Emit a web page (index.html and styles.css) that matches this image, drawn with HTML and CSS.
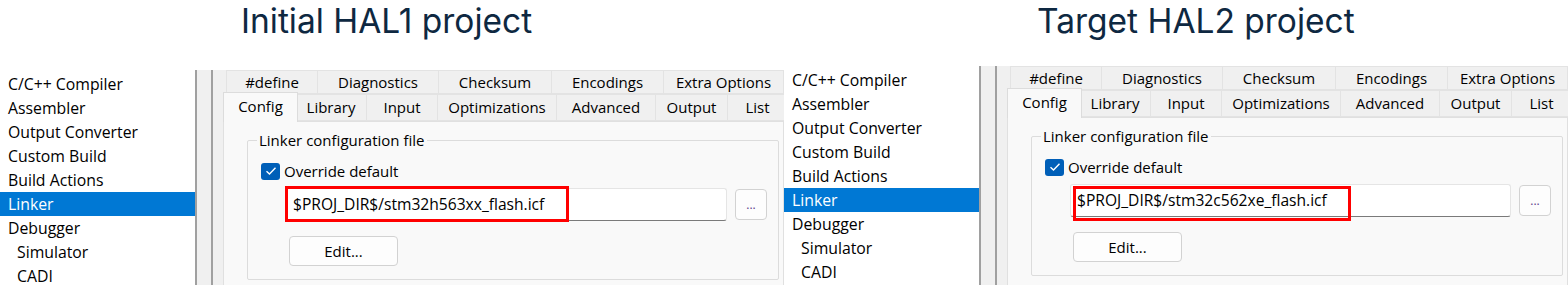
FILE: index.html
```html
<!DOCTYPE html>
<html lang="en">
<head>
    <meta charset="UTF-8">
    <meta name="viewport" content="width=device-width, initial-scale=1.0">
    <title>HAL1 to HAL2 linker options</title>
    <link rel="stylesheet" href="styles.css">
</head>
<body>

    <div class="slide">

        <div class="half half-left">
            <h2 class="title">Initial HAL1 project</h2>
            <div class="shot">
                <ul class="tree">
                    <li>C/C++ Compiler</li>
                    <li>Assembler</li>
                    <li>Output Converter</li>
                    <li>Custom Build</li>
                    <li>Build Actions</li>
                    <li class="selected">Linker</li>
                    <li>Debugger</li>
                    <li class="sub">Simulator</li>
                    <li class="sub">CADI</li>
                </ul>
                <div class="splitter"></div>
                <div class="dialog">
                    <div class="tab-row back">
                        <div class="tab">#define</div>
                        <div class="tab">Diagnostics</div>
                        <div class="tab">Checksum</div>
                        <div class="tab">Encodings</div>
                        <div class="tab">Extra Options</div>
                    </div>
                    <div class="tab-row front">
                        <div class="tab active">Config</div>
                        <div class="tab">Library</div>
                        <div class="tab">Input</div>
                        <div class="tab">Optimizations</div>
                        <div class="tab">Advanced</div>
                        <div class="tab">Output</div>
                        <div class="tab">List</div>
                    </div>
                    <div class="page">
                        <fieldset class="group">
                            <legend>Linker configuration file</legend>
                            <label class="check">
                                <span class="box">
                                    <svg width="12" height="10" viewBox="0 0 12 10"><path d="M1.5 5.2 L4.5 8 L10.5 1.8" fill="none" stroke="#fff" stroke-width="1.4"/></svg>
                                </span>
                                Override default
                            </label>
                            <div class="path-row">
                                <div class="path">$PROJ_DIR$/stm32h563xx_flash.icf</div>
                                <button class="browse">...</button>
                            </div>
                            <button class="edit">Edit...</button>
                        </fieldset>
                    </div>
                </div>
                <div class="mark mark-left"></div>
            </div>
        </div>

        <div class="half half-right">
            <h2 class="title">Target HAL2 project</h2>
            <div class="shot">
                <ul class="tree">
                    <li>C/C++ Compiler</li>
                    <li>Assembler</li>
                    <li>Output Converter</li>
                    <li>Custom Build</li>
                    <li>Build Actions</li>
                    <li class="selected">Linker</li>
                    <li>Debugger</li>
                    <li class="sub">Simulator</li>
                    <li class="sub">CADI</li>
                </ul>
                <div class="splitter"></div>
                <div class="dialog">
                    <div class="tab-row back">
                        <div class="tab">#define</div>
                        <div class="tab">Diagnostics</div>
                        <div class="tab">Checksum</div>
                        <div class="tab">Encodings</div>
                        <div class="tab">Extra Options</div>
                    </div>
                    <div class="tab-row front">
                        <div class="tab active">Config</div>
                        <div class="tab">Library</div>
                        <div class="tab">Input</div>
                        <div class="tab">Optimizations</div>
                        <div class="tab">Advanced</div>
                        <div class="tab">Output</div>
                        <div class="tab">List</div>
                    </div>
                    <div class="page">
                        <fieldset class="group">
                            <legend>Linker configuration file</legend>
                            <label class="check">
                                <span class="box">
                                    <svg width="12" height="10" viewBox="0 0 12 10"><path d="M1.5 5.2 L4.5 8 L10.5 1.8" fill="none" stroke="#fff" stroke-width="1.4"/></svg>
                                </span>
                                Override default
                            </label>
                            <div class="path-row">
                                <div class="path">$PROJ_DIR$/stm32c562xe_flash.icf</div>
                                <button class="browse">...</button>
                            </div>
                            <button class="edit">Edit...</button>
                        </fieldset>
                    </div>
                </div>
                <div class="mark mark-right"></div>
            </div>
        </div>

    </div>

</body>
</html>
```

FILE: styles.css
```css
* {
    margin: 0;
    padding: 0;
    box-sizing: border-box;
}

body {
    background: #ffffff;
    font-family: "Open Sans", "Noto Sans", sans-serif;
    font-size: 15px;
    color: #000000;
    overflow: hidden;
}

.slide {
    display: flex;
    width: 1568px;
    height: 285px;
    overflow: hidden;
}

.half {
    width: 784px;
    flex: none;
    overflow: hidden;
}

.title {
    font-family: Inter, "Noto Sans", sans-serif;
    font-weight: 400;
    font-size: 33.5px;
    line-height: 40px;
    color: #0e2841;
    height: 70px;
    padding-top: 1px;
}

.half-left .title {
    padding-left: 241px;
}

.half-right .title {
    padding-left: 253px;
    height: 66px;
}

/* screenshot */
.shot {
    position: relative;
    display: flex;
    height: 220px;
}

.tree {
    list-style: none;
    width: 195px;
    flex: none;
    background: #ffffff;
    padding-top: 2px;
    font-size: 15.8px;
}

.tree li {
    height: 24px;
    line-height: 24px;
    padding-left: 8px;
    white-space: nowrap;
}

.tree li.sub {
    padding-left: 17px;
}

.tree li.selected {
    background: #0078d4;
    color: #ffffff;
}

.splitter {
    width: 18px;
    flex: none;
    background: #f0f0f0;
    border-left: 2px solid #a0a0a0;
    border-right: 2px solid #a0a0a0;
}

.dialog {
    flex: 1;
    background: #f0f0f0;
    overflow: hidden;
    display: flex;
    flex-direction: column;
}

/* tabs */
.tab-row {
    display: grid;
    flex: none;
}

.tab-row.back {
    height: 24px;
    margin-left: 13px;
    grid-template-columns: 92px 121px 113px 112px 120px;
}

.tab-row.front {
    height: 27px;
    margin-left: 12px;
    grid-template-columns: 71px 71px 71px 119px 99px 72px 60px;
}

.tab {
    background: #f0f0f0;
    border-top: 1px solid #e3e3e3;
    border-right: 1px solid #e3e3e3;
    border-bottom: 1px solid #e3e3e3;
    text-align: center;
    line-height: 22px;
    white-space: nowrap;
}

.back .tab:first-child {
    border-left: 1px solid #e3e3e3;
}

.front .tab {
    line-height: 25px;
}

.tab.active {
    position: relative;
    z-index: 1;
    margin: -2px -2px -1px -2px;
    background: #f9f9f9;
    border: 1px solid #dcdcdc;
    border-bottom: none;
    line-height: 26px;
}

.page {
    flex: 1;
    margin-left: 10px;
    background: #f9f9f9;
    border: 1px solid #e0e0e0;
    padding: 0 0 0 23px;
}

/* group box */
.group {
    width: 532px;
    height: 151px;
    border: 1px solid #dcdcdc;
    border-radius: 2px;
    padding: 0 0 0 9px;
    margin-top: 7px;
}

.group legend {
    padding: 0 2px;
    line-height: 22px;
}

.check {
    display: flex;
    align-items: center;
    gap: 4px;
    height: 18px;
    margin: 11px 0 0 4px;
}

.box {
    width: 19px;
    height: 17px;
    border-radius: 3px;
    background: #005fb8;
    display: flex;
    align-items: center;
    justify-content: center;
}

.path-row {
    display: flex;
    align-items: center;
    gap: 8px;
    margin: 8px 0 0 29px;
}

.path {
    width: 441px;
    height: 33px;
    background: #ffffff;
    border: 1px solid #e5e5e5;
    border-bottom: 1px solid #7a7a7a;
    border-radius: 3px;
    padding-left: 6px;
    font-size: 15.6px;
    line-height: 30px;
    white-space: nowrap;
}

.browse,
.edit {
    font-family: "Open Sans", "Noto Sans", sans-serif;
    background: #fdfdfd;
    border: 1px solid #d2d2d2;
    border-radius: 4px;
    color: #000000;
}

.browse {
    width: 32px;
    height: 31px;
    font-size: 12px;
    color: #5b3f8c;
}

.edit {
    display: block;
    width: 109px;
    height: 30px;
    font-size: 15px;
    margin: 15px 0 0 32px;
}

/* red highlight drawn on top of the screenshot */
.mark {
    position: absolute;
    border: 3px solid #ff0000;
}

.mark-left {
    left: 285px;
    top: 116px;
    width: 284px;
    height: 36px;
}

.mark-right {
    left: 289px;
    top: 120px;
    width: 278px;
    height: 35px;
}
```
